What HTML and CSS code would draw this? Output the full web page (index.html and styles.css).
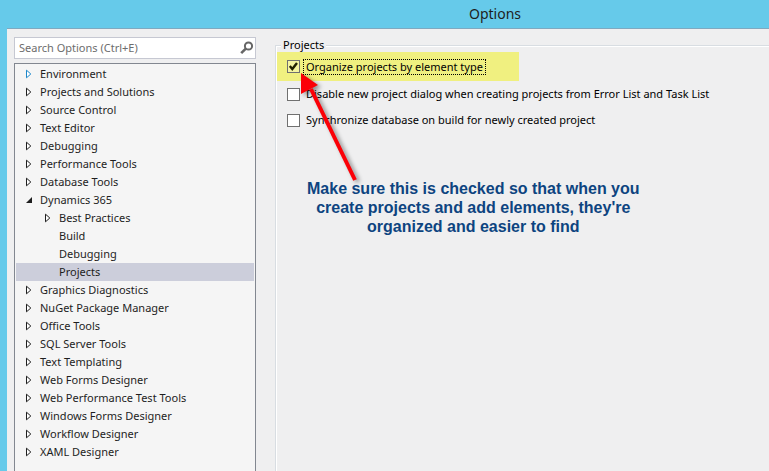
FILE: index.html
```
<!DOCTYPE html>
<html lang="en">
<head>
  <meta charset="UTF-8">
  <meta name="viewport" content="width=device-width, initial-scale=1.0">
  <title>Options</title>
  <link rel="stylesheet" href="styles.css">
</head>
<body>
  <header class="titlebar">
    <h1>Options</h1>
  </header>
  <main class="dialog">
    <aside class="sidebar">
      <form class="search">
        <input type="text" id="search" placeholder="Search Options (Ctrl+E)" aria-label="Search Options">
        <button type="submit" aria-label="Search">
          <svg width="14" height="14" viewBox="0 0 14 14">
            <circle cx="8.5" cy="5" r="3.6" fill="none" stroke="#666" stroke-width="2"/>
            <path d="M5.8 7.6L1.2 12.2" fill="none" stroke="#666" stroke-width="2.6"/>
          </svg>
        </button>
      </form>
      <ul class="tree" role="tree">
        <li class="closed hot" role="treeitem">Environment</li>
        <li class="closed" role="treeitem">Projects and Solutions</li>
        <li class="closed" role="treeitem">Source Control</li>
        <li class="closed" role="treeitem">Text Editor</li>
        <li class="closed" role="treeitem">Debugging</li>
        <li class="closed" role="treeitem">Performance Tools</li>
        <li class="closed" role="treeitem">Database Tools</li>
        <li class="open" role="treeitem">Dynamics 365</li>
        <li class="closed child" role="treeitem">Best Practices</li>
        <li class="child" role="treeitem">Build</li>
        <li class="child" role="treeitem">Debugging</li>
        <li class="child selected" role="treeitem" aria-selected="true">Projects</li>
        <li class="closed" role="treeitem">Graphics Diagnostics</li>
        <li class="closed" role="treeitem">NuGet Package Manager</li>
        <li class="closed" role="treeitem">Office Tools</li>
        <li class="closed" role="treeitem">SQL Server Tools</li>
        <li class="closed" role="treeitem">Text Templating</li>
        <li class="closed" role="treeitem">Web Forms Designer</li>
        <li class="closed" role="treeitem">Web Performance Test Tools</li>
        <li class="closed" role="treeitem">Windows Forms Designer</li>
        <li class="closed" role="treeitem">Workflow Designer</li>
        <li class="closed" role="treeitem">XAML Designer</li>
      </ul>
    </aside>
    <section class="group" aria-labelledby="group-title">
      <h2 id="group-title">Projects</h2>
      <div class="option highlight">
        <input type="checkbox" id="organize" checked>
        <label for="organize" class="focused">Organize projects by element type</label>
      </div>
      <div class="option">
        <input type="checkbox" id="disable">
        <label for="disable">Disable new project dialog when creating projects from Error List and Task List</label>
      </div>
      <div class="option">
        <input type="checkbox" id="sync">
        <label for="sync">Synchronize database on build for newly created project</label>
      </div>
      <p class="note">Make sure this is checked so that when you<br>create projects and add elements, they're<br>organized and easier to find</p>
      <!-- arrow from the note to the first checkbox -->
      <svg class="arrow" width="70" height="120" viewBox="0 0 70 120" aria-hidden="true">
        <path d="M11 16L55 107" stroke="#fb0007" stroke-width="4" fill="none"/>
        <path d="M1 0L18 12L1 21Z" fill="#fb0007"/>
      </svg>
    </section>
  </main>
</body>
</html>
```

FILE: styles.css
```
* {
  box-sizing: border-box;
}
body {
  margin: 0;
  height: 100vh;
  display: flex;
  flex-direction: column;
  overflow: hidden;
  background-color: #66caea;
  font-family: "Noto Sans", "Open Sans", sans-serif;
  font-size: 11px;
  line-height: 18px;
  color: #1e1e1e;
}
.titlebar {
  height: 28px;
  padding-left: 221px;
}
.titlebar h1 {
  margin: 0;
  font-size: 14px;
  font-weight: normal;
  line-height: 28px;
  text-align: center;
}
.dialog {
  flex: 1;
  min-height: 0;
  display: flex;
  gap: 19px;
  margin-left: 7px;
  padding: 8px 0 0 7px;
  border-top: 1px solid #7fa9c0;
  background-color: #efeff0;
}
.sidebar {
  flex: none;
  width: 242px;
  display: flex;
  flex-direction: column;
  gap: 4px;
}
.search {
  display: flex;
  align-items: center;
  height: 22px;
  border: 1px solid #c6c8d2;
  background-color: #fff;
}
.search input {
  flex: 1;
  min-width: 0;
  border: none;
  outline: none;
  padding: 0 4px;
  background: none;
  font: inherit;
}
.search input::placeholder {
  color: #6d6d6d;
  opacity: 1;
}
.search button {
  display: flex;
  border: none;
  padding: 0 1px;
  background: none;
}
.tree {
  flex: 1;
  margin: 0;
  padding: 1px;
  list-style: none;
  border: 1px solid #828790;
  border-bottom: none;
  background-color: #f5f5f5;
}
.tree li {
  display: flex;
  align-items: center;
  height: 18px;
  padding-left: 10px;
}
.tree li::before {
  content: "";
  width: 6px;
  height: 10px;
  margin-right: 8px;
}
.tree .child {
  padding-left: 29px;
}
.tree .closed::before {
  background-image: url("data:image/svg+xml,%3Csvg xmlns='http://www.w3.org/2000/svg' width='6' height='10'%3E%3Cpath d='M.5 1.2L4.8 5L.5 8.8Z' fill='white' stroke='%231e1e1e'/%3E%3C/svg%3E");
}
.tree .hot::before {
  background-image: url("data:image/svg+xml,%3Csvg xmlns='http://www.w3.org/2000/svg' width='6' height='10'%3E%3Cpath d='M.5 1.2L4.8 5L.5 8.8Z' fill='white' stroke='%231c87ca'/%3E%3C/svg%3E");
}
.tree .open::before {
  background-image: url("data:image/svg+xml,%3Csvg xmlns='http://www.w3.org/2000/svg' width='6' height='10'%3E%3Cpath d='M6 2V8H0Z' fill='%231e1e1e'/%3E%3C/svg%3E");
}
.tree .selected {
  background-color: #cccedb;
}
.group {
  position: relative;
  flex: 1;
  min-width: 0;
  margin-top: 8px;
  padding-left: 1px;
  border-left: 1px solid #d8dde2;
  border-top: 1px solid #d8dde2;
  box-shadow: inset 1px 1px #fff;
  color: #000;
}
.group h2 {
  width: max-content;
  margin: -10px 0 -2px 4px;
  padding: 0 2px;
  background-color: #efeff0;
  font-size: 11px;
  font-weight: normal;
}
.option {
  display: flex;
  align-items: center;
  gap: 3px;
  height: 26px;
  padding-left: 10px;
}
.option input {
  appearance: none;
  flex: none;
  width: 13px;
  height: 13px;
  margin: 0;
  border: 1px solid #707070;
  background-color: #fff;
}
.option input:checked {
  background: #f5f5a0 url("data:image/svg+xml,%3Csvg xmlns='http://www.w3.org/2000/svg' width='11' height='11'%3E%3Cpath d='M1.8 5L4.3 8L9 2' fill='none' stroke='%23222200' stroke-width='2.4'/%3E%3C/svg%3E");
}
.option label {
  padding: 0 2px;
  border: 1px solid transparent;
  line-height: 14px;
  white-space: nowrap;
}
.option .focused {
  border: 1px dotted #000;
}
.highlight {
  width: 242px;
  height: 29px;
  background-color: #f0f080;
}
.note {
  width: max-content;
  margin: 46px 0 0 30px;
  color: #0d4480;
  font-family: "Liberation Sans", Arial, sans-serif;
  font-size: 16px;
  font-weight: bold;
  line-height: 19px;
  text-align: center;
}
.arrow {
  position: absolute;
  left: 24px;
  top: 27px;
  filter: drop-shadow(3px 2px 2px rgba(0, 0, 0, 0.4));
}
```
